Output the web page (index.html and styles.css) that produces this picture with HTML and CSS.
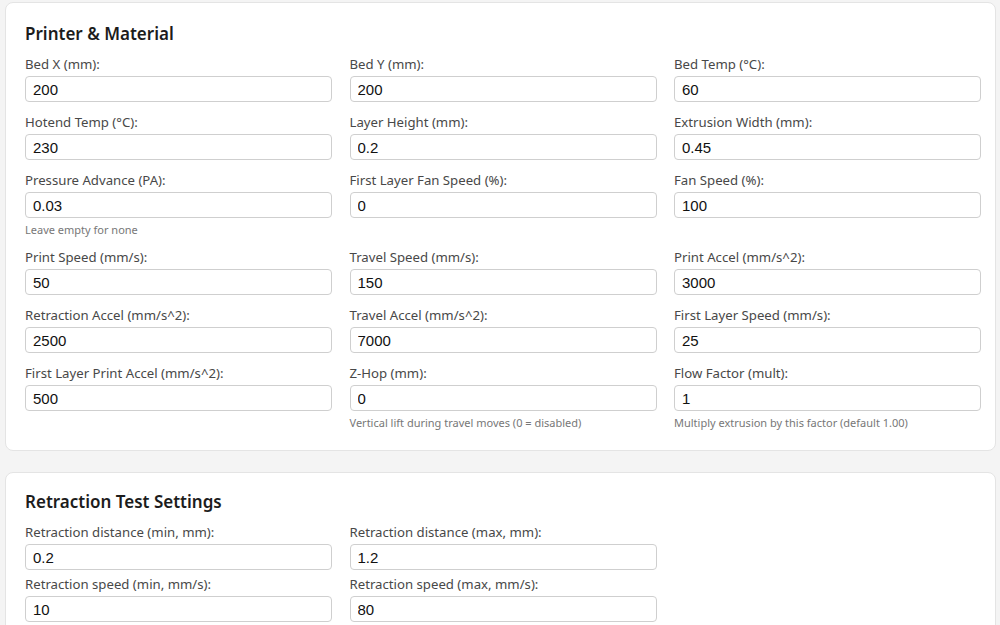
FILE: index.html
```html
<!DOCTYPE html>
<html lang="en">
<head>
    <meta charset="UTF-8">
    <meta name="viewport" content="width=device-width, initial-scale=1.0">
    <title>Printer &amp; Material</title>
    <link rel="stylesheet" href="styles.css">
</head>
<body>
    <div class="page">
        <section class="card">
            <h2>Printer &amp; Material</h2>
            <div class="grid">
                <div class="field">
                    <label>Bed X (mm):</label>
                    <input type="text" value="200">
                </div>
                <div class="field">
                    <label>Bed Y (mm):</label>
                    <input type="text" value="200">
                </div>
                <div class="field">
                    <label>Bed Temp (°C):</label>
                    <input type="text" value="60">
                </div>

                <div class="field">
                    <label>Hotend Temp (°C):</label>
                    <input type="text" value="230">
                </div>
                <div class="field">
                    <label>Layer Height (mm):</label>
                    <input type="text" value="0.2">
                </div>
                <div class="field">
                    <label>Extrusion Width (mm):</label>
                    <input type="text" value="0.45">
                </div>

                <div class="field">
                    <label>Pressure Advance (PA):</label>
                    <input type="text" value="0.03">
                    <small class="hint">Leave empty for none</small>
                </div>
                <div class="field">
                    <label>First Layer Fan Speed (%):</label>
                    <input type="text" value="0">
                </div>
                <div class="field">
                    <label>Fan Speed (%):</label>
                    <input type="text" value="100">
                </div>

                <div class="field">
                    <label>Print Speed (mm/s):</label>
                    <input type="text" value="50">
                </div>
                <div class="field">
                    <label>Travel Speed (mm/s):</label>
                    <input type="text" value="150">
                </div>
                <div class="field">
                    <label>Print Accel (mm/s^2):</label>
                    <input type="text" value="3000">
                </div>

                <div class="field">
                    <label>Retraction Accel (mm/s^2):</label>
                    <input type="text" value="2500">
                </div>
                <div class="field">
                    <label>Travel Accel (mm/s^2):</label>
                    <input type="text" value="7000">
                </div>
                <div class="field">
                    <label>First Layer Speed (mm/s):</label>
                    <input type="text" value="25">
                </div>

                <div class="field">
                    <label>First Layer Print Accel (mm/s^2):</label>
                    <input type="text" value="500">
                </div>
                <div class="field">
                    <label>Z-Hop (mm):</label>
                    <input type="text" value="0">
                    <small class="hint">Vertical lift during travel moves (0 = disabled)</small>
                </div>
                <div class="field">
                    <label>Flow Factor (mult):</label>
                    <input type="text" value="1">
                    <small class="hint">Multiply extrusion by this factor (default 1.00)</small>
                </div>
            </div>
        </section>

        <section class="card card-test">
            <h2>Retraction Test Settings</h2>
            <div class="grid">
                <div class="field">
                    <label>Retraction distance (min, mm):</label>
                    <input type="text" value="0.2">
                </div>
                <div class="field">
                    <label>Retraction distance (max, mm):</label>
                    <input type="text" value="1.2">
                </div>
                <div></div>

                <div class="field">
                    <label>Retraction speed (min, mm/s):</label>
                    <input type="text" value="10">
                </div>
                <div class="field">
                    <label>Retraction speed (max, mm/s):</label>
                    <input type="text" value="80">
                </div>
                <div></div>
            </div>
        </section>
    </div>
</body>
</html>
```

FILE: styles.css
```css
body {
    margin: 0;
    background: #f4f4f4;
    font-family: "Noto Sans", "Open Sans", Arial, sans-serif;
    color: #222;
}

.page {
    padding: 2px 4px 0 5px;
}

.card {
    background: white;
    border: 1px solid #e4e4e4;
    border-radius: 8px;
    padding: 19px 14px 10px 19px;
    margin-bottom: 21px;
}

.card h2 {
    font-size: 17px;
    font-weight: 600;
    line-height: 24px;
    margin: 0 0 8px 0;
    color: #1c1c1c;
}

.grid {
    display: grid;
    grid-template-columns: 1fr 1fr 1fr;
    column-gap: 17.5px;
}

.field {
    display: flex;
    flex-direction: column;
    margin-bottom: 10px;
}

.field label {
    font-size: 13.2px;
    line-height: 20px;
    color: #484848;
    margin-bottom: 2px;
}

.field input {
    font-family: "Liberation Sans", Arial, sans-serif;
    font-size: 15px;
    color: #111;
    height: 26px;
    box-sizing: border-box;
    padding: 0 7px;
    border: 1px solid #cfcfcf;
    border-radius: 4px;
    background: white;
    outline: none;
}

.hint {
    font-size: 11px;
    line-height: 15px;
    color: #777;
    margin-top: 4px;
}

.card-test {
    padding-top: 17px;
}

.card-test .field {
    margin-bottom: 4px;
}
```
